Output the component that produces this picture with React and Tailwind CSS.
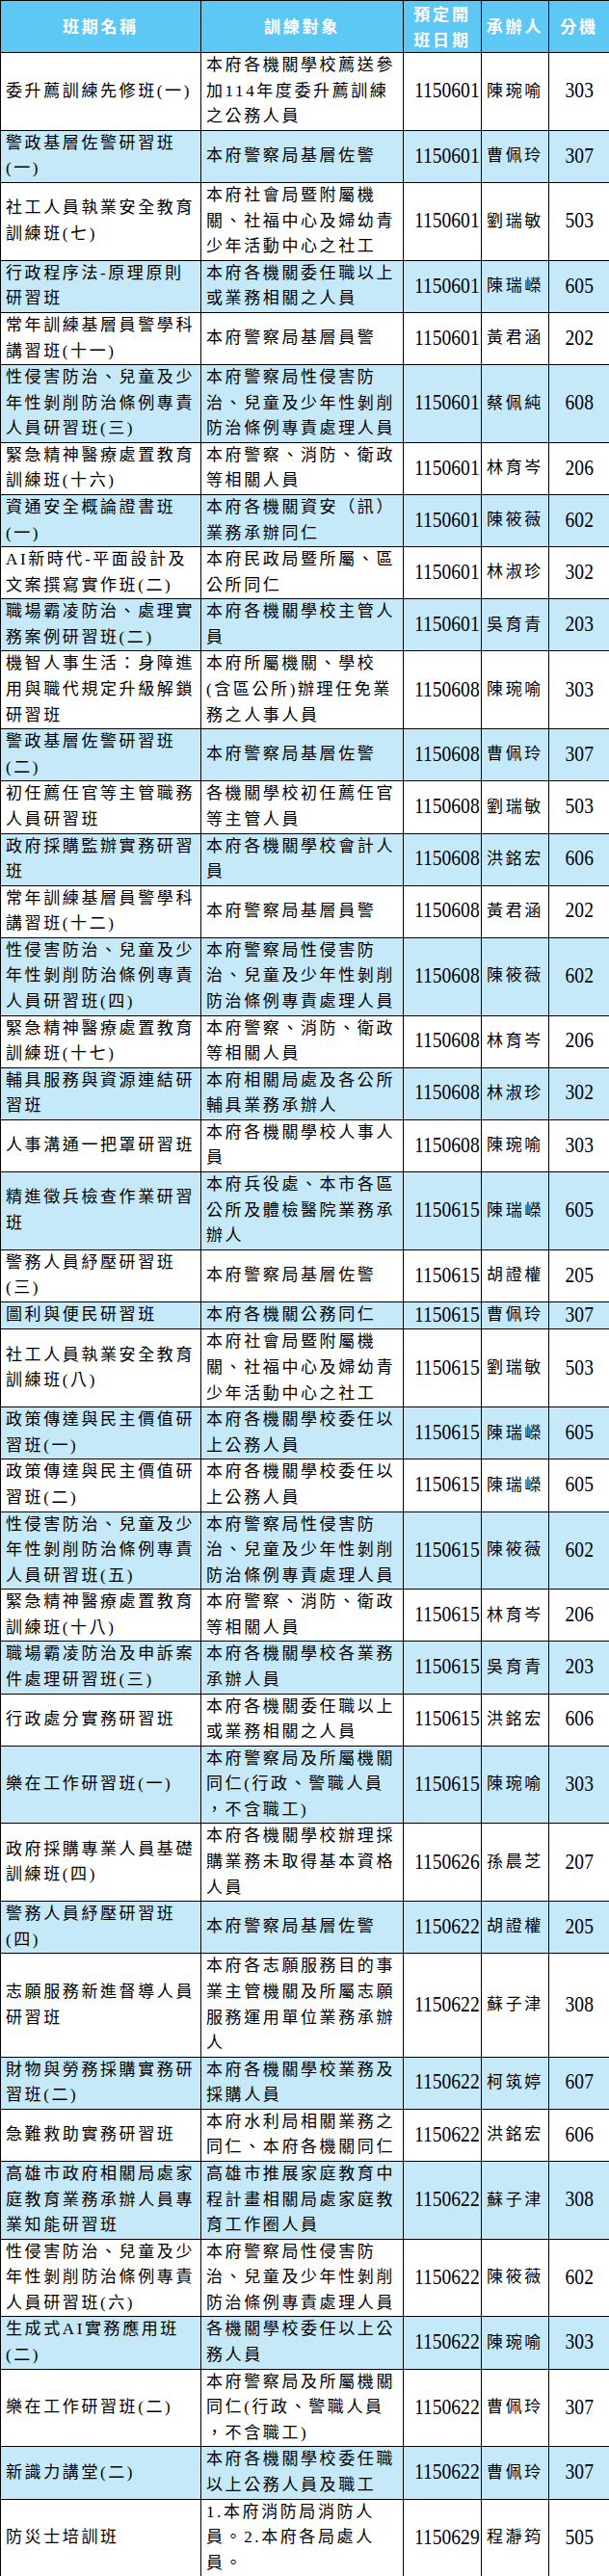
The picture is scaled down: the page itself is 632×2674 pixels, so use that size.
import React from "react";

const SHX = ["性侵害防治、兒童及少", "年性剝削防治條例專責"];
const SHY = ["本府警察局性侵害防", "治、兒童及少年性剝削", "防治條例專責處理人員"];

const rows = [
  [["委升薦訓練先修班(一)"], ["本府各機關學校薦送參", "加114年度委升薦訓練", "之公務人員"], "1150601", "陳琬喻", "303"],
  [["警政基層佐警研習班", "(一)"], ["本府警察局基層佐警"], "1150601", "曹佩玲", "307"],
  [["社工人員執業安全教育", "訓練班(七)"], ["本府社會局暨附屬機", "關、社福中心及婦幼青", "少年活動中心之社工"], "1150601", "劉瑞敏", "503"],
  [["行政程序法-原理原則", "研習班"], ["本府各機關委任職以上", "或業務相關之人員"], "1150601", "陳瑞嶸", "605"],
  [["常年訓練基層員警學科", "講習班(十一)"], ["本府警察局基層員警"], "1150601", "黃君涵", "202"],
  [[...SHX, "人員研習班(三)"], SHY, "1150601", "蔡佩純", "608"],
  [["緊急精神醫療處置教育", "訓練班(十六)"], ["本府警察、消防、衛政", "等相關人員"], "1150601", "林育岑", "206"],
  [["資通安全概論證書班", "(一)"], ["本府各機關資安（訊）", "業務承辦同仁"], "1150601", "陳筱薇", "602"],
  [["AI新時代-平面設計及", "文案撰寫實作班(二)"], ["本府民政局暨所屬、區", "公所同仁"], "1150601", "林淑珍", "302"],
  [["職場霸凌防治、處理實", "務案例研習班(二)"], ["本府各機關學校主管人", "員"], "1150601", "吳育青", "203"],
  [["機智人事生活：身障進", "用與職代規定升級解鎖", "研習班"], ["本府所屬機關、學校", "(含區公所)辦理任免業", "務之人事人員"], "1150608", "陳琬喻", "303"],
  [["警政基層佐警研習班", "(二)"], ["本府警察局基層佐警"], "1150608", "曹佩玲", "307"],
  [["初任薦任官等主管職務", "人員研習班"], ["各機關學校初任薦任官", "等主管人員"], "1150608", "劉瑞敏", "503"],
  [["政府採購監辦實務研習", "班"], ["本府各機關學校會計人", "員"], "1150608", "洪銘宏", "606"],
  [["常年訓練基層員警學科", "講習班(十二)"], ["本府警察局基層員警"], "1150608", "黃君涵", "202"],
  [[...SHX, "人員研習班(四)"], SHY, "1150608", "陳筱薇", "602"],
  [["緊急精神醫療處置教育", "訓練班(十七)"], ["本府警察、消防、衛政", "等相關人員"], "1150608", "林育岑", "206"],
  [["輔具服務與資源連結研", "習班"], ["本府相關局處及各公所", "輔具業務承辦人"], "1150608", "林淑珍", "302"],
  [["人事溝通一把罩研習班"], ["本府各機關學校人事人", "員"], "1150608", "陳琬喻", "303"],
  [["精進徵兵檢查作業研習", "班"], ["本府兵役處、本市各區", "公所及體檢醫院業務承", "辦人"], "1150615", "陳瑞嶸", "605"],
  [["警務人員紓壓研習班", "(三)"], ["本府警察局基層佐警"], "1150615", "胡證權", "205"],
  [["圖利與便民研習班"], ["本府各機關公務同仁"], "1150615", "曹佩玲", "307"],
  [["社工人員執業安全教育", "訓練班(八)"], ["本府社會局暨附屬機", "關、社福中心及婦幼青", "少年活動中心之社工"], "1150615", "劉瑞敏", "503"],
  [["政策傳達與民主價值研", "習班(一)"], ["本府各機關學校委任以", "上公務人員"], "1150615", "陳瑞嶸", "605"],
  [["政策傳達與民主價值研", "習班(二)"], ["本府各機關學校委任以", "上公務人員"], "1150615", "陳瑞嶸", "605"],
  [[...SHX, "人員研習班(五)"], SHY, "1150615", "陳筱薇", "602"],
  [["緊急精神醫療處置教育", "訓練班(十八)"], ["本府警察、消防、衛政", "等相關人員"], "1150615", "林育岑", "206"],
  [["職場霸凌防治及申訴案", "件處理研習班(三)"], ["本府各機關學校各業務", "承辦人員"], "1150615", "吳育青", "203"],
  [["行政處分實務研習班"], ["本府各機關委任職以上", "或業務相關之人員"], "1150615", "洪銘宏", "606"],
  [["樂在工作研習班(一)"], ["本府警察局及所屬機關", "同仁(行政、警職人員", "，不含職工)"], "1150615", "陳琬喻", "303"],
  [["政府採購專業人員基礎", "訓練班(四)"], ["本府各機關學校辦理採", "購業務未取得基本資格", "人員"], "1150626", "孫晨芝", "207"],
  [["警務人員紓壓研習班", "(四)"], ["本府警察局基層佐警"], "1150622", "胡證權", "205"],
  [["志願服務新進督導人員", "研習班"], ["本府各志願服務目的事", "業主管機關及所屬志願", "服務運用單位業務承辦", "人"], "1150622", "蘇子津", "308"],
  [["財物與勞務採購實務研", "習班(二)"], ["本府各機關學校業務及", "採購人員"], "1150622", "柯筑婷", "607"],
  [["急難救助實務研習班"], ["本府水利局相關業務之", "同仁、本府各機關同仁"], "1150622", "洪銘宏", "606"],
  [["高雄市政府相關局處家", "庭教育業務承辦人員專", "業知能研習班"], ["高雄市推展家庭教育中", "程計畫相關局處家庭教", "育工作圈人員"], "1150622", "蘇子津", "308"],
  [[...SHX, "人員研習班(六)"], SHY, "1150622", "陳筱薇", "602"],
  [["生成式AI實務應用班", "(二)"], ["各機關學校委任以上公", "務人員"], "1150622", "陳琬喻", "303"],
  [["樂在工作研習班(二)"], ["本府警察局及所屬機關", "同仁(行政、警職人員", "，不含職工)"], "1150622", "曹佩玲", "307"],
  [["新識力講堂(二)"], ["本府各機關學校委任職", "以上公務人員及職工"], "1150622", "曹佩玲", "307"],
  [["防災士培訓班"], ["1.本府消防局消防人", "員。2.本府各局處人", "員。"], "1150629", "程瀞筠", "505"],
];

const cell = "border border-black px-[5px] py-0 align-middle leading-[26.58px]";
const txt = "font-['Liberation_Serif','Noto_Sans_CJK_TC',serif] text-[17px] tracking-[2.6px] text-black";

function Lines({ lines }) {
  return (
    <>
      {lines.map((l, i) => (
        <div key={i} className="whitespace-nowrap">
          {l}
        </div>
      ))}
    </>
  );
}

function Num({ v }) {
  return (
    <span className="inline-block scale-x-[0.85] whitespace-nowrap font-['Liberation_Serif',serif] text-[23px] leading-[26.58px] text-black">
      {v}
    </span>
  );
}

export default function App() {
  const head = "border border-black px-0 py-0 align-middle text-center leading-[26.58px] text-white font-bold font-['Noto_Sans_CJK_TC',sans-serif] text-[17px] tracking-[2.8px]";
  return (
    <div className="w-[632px] bg-white">
      <table className="w-[632px] table-fixed border-collapse">
        <colgroup>
          <col className="w-[208px]" />
          <col className="w-[210px]" />
          <col className="w-[81px]" />
          <col className="w-[70px]" />
          <col className="w-[63px]" />
        </colgroup>
        <thead>
          <tr className="bg-[#5ec8f5]">
            <th className={head}>班期名稱</th>
            <th className={head}>訓練對象</th>
            <th className={head}>
              <div>預定開</div>
              <div>班日期</div>
            </th>
            <th className={head}>承辦人</th>
            <th className={head}>分機</th>
          </tr>
        </thead>
        <tbody>
          {rows.map((r, i) => (
            <tr key={i} className={i % 2 === 1 ? "bg-[#c6e9f9]" : "bg-white"}>
              <td className={`${cell} ${txt}`}>
                <Lines lines={r[0]} />
              </td>
              <td className={`${cell} ${txt}`}>
                <Lines lines={r[1]} />
              </td>
              <td className={`${cell} px-0 text-center`}>
                <Num v={r[2]} />
              </td>
              <td className={`${cell} ${txt} px-0 text-center`}>{r[3]}</td>
              <td className={`${cell} px-0 text-center`}>
                <Num v={r[4]} />
              </td>
            </tr>
          ))}
        </tbody>
      </table>
    </div>
  );
}
